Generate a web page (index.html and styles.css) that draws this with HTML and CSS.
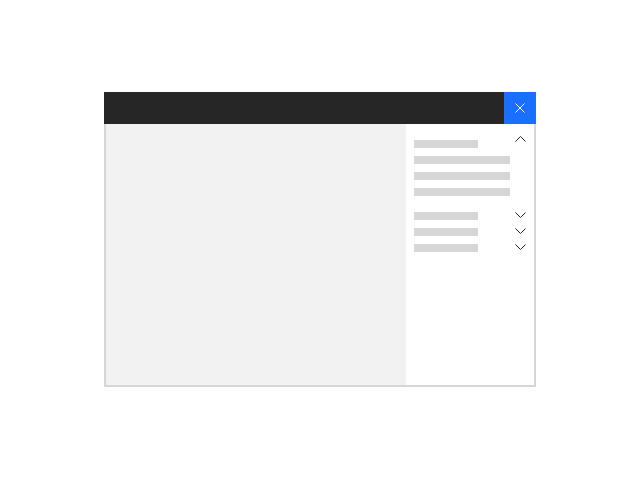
FILE: index.html
```html
<!DOCTYPE html>
<html lang="en">
<head>
    <meta charset="UTF-8">
    <title>Panel</title>
    <link rel="stylesheet" href="styles.css">
</head>
<body>
    <div class="window">
        <div class="titlebar">
            <div class="title-fill"></div>
            <button class="close-btn" aria-label="Close">
                <svg width="10" height="10" viewBox="0 0 10 10"><path d="M0.5 0.5L9.5 9.5M9.5 0.5L0.5 9.5" stroke="#fff" stroke-width="1" fill="none"/></svg>
            </button>
        </div>
        <div class="content">
            <div class="canvas"></div>
            <div class="side-panel">
                <div class="group">
                    <div class="row">
                        <span class="bar short"></span>
                        <svg class="chevron up" width="11" height="6" viewBox="0 0 11 6"><path d="M0.5 5.5L5.5 0.5L10.5 5.5" stroke="#222" stroke-width="1" fill="none"/></svg>
                    </div>
                    <div class="row"><span class="bar long"></span></div>
                    <div class="row"><span class="bar long"></span></div>
                    <div class="row"><span class="bar long"></span></div>
                </div>
                <div class="group">
                    <div class="row">
                        <span class="bar short"></span>
                        <svg class="chevron" width="11" height="6" viewBox="0 0 11 6"><path d="M0.5 0.5L5.5 5.5L10.5 0.5" stroke="#222" stroke-width="1" fill="none"/></svg>
                    </div>
                    <div class="row">
                        <span class="bar short"></span>
                        <svg class="chevron" width="11" height="6" viewBox="0 0 11 6"><path d="M0.5 0.5L5.5 5.5L10.5 0.5" stroke="#222" stroke-width="1" fill="none"/></svg>
                    </div>
                    <div class="row">
                        <span class="bar short"></span>
                        <svg class="chevron" width="11" height="6" viewBox="0 0 11 6"><path d="M0.5 0.5L5.5 5.5L10.5 0.5" stroke="#222" stroke-width="1" fill="none"/></svg>
                    </div>
                </div>
            </div>
        </div>
    </div>
</body>
</html>
```

FILE: styles.css
```css
body {
    margin: 0;
    padding: 92px 0 0 104px;
    background-color: #fff;
    font-family: 'Liberation Sans', Arial, sans-serif;
}

.window {
    width: 432px;
    display: flex;
    flex-direction: column;
}

.titlebar {
    display: flex;
    height: 32px;
}

.title-fill {
    flex-grow: 1;
    background-color: #262626;
}

.close-btn {
    width: 32px;
    height: 32px;
    border: none;
    padding: 0;
    margin: 0;
    background-color: #1a6fff;
    display: flex;
    align-items: center;
    justify-content: center;
}

.content {
    display: flex;
    height: 261px;
    border: 2px solid #d6d6d6;
    border-top: none;
}

.canvas {
    width: 300px;
    background-color: #f2f2f2;
}

.side-panel {
    flex-grow: 1;
    background-color: #fff;
    padding: 16px 8px 0 8px;
    display: flex;
    flex-direction: column;
    gap: 16px;
}

.group {
    display: flex;
    flex-direction: column;
    gap: 8px;
}

.row {
    display: flex;
    justify-content: space-between;
    align-items: flex-start;
    height: 8px;
}

.bar {
    display: block;
    height: 8px;
    background-color: #d6d6d6;
}

.bar.short {
    width: 64px;
}

.bar.long {
    width: 96px;
}

.chevron {
    display: block;
    flex-shrink: 0;
}

.chevron.up {
    margin-top: -4px;
}
```
